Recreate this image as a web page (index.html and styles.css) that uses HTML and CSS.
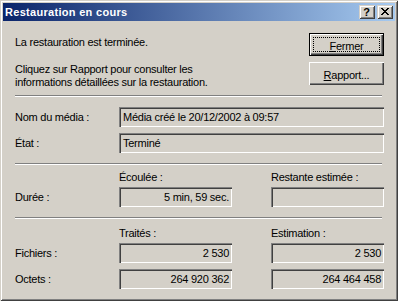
FILE: index.html
```html
<!DOCTYPE html>
<html lang="fr">
<head>
    <meta charset="UTF-8">
    <meta name="viewport" content="width=device-width, initial-scale=1.0">
    <title>Restauration en cours</title>
    <link rel="stylesheet" href="styles.css">
</head>
<body>

    <div class="window">
        <div class="titlebar">
            <span class="title">Restauration en cours</span>
            <div class="caption-btns">
                <button class="cap-btn help">?</button>
                <button class="cap-btn close">
                    <svg width="8" height="7" viewBox="0 0 8 7" shape-rendering="crispEdges">
                        <path d="M0 0h2v1H0zM6 0h2v1H6zM1 1h2v1H1zM5 1h2v1H5zM2 2h4v1H2zM3 3h2v1H3zM2 4h4v1H2zM1 5h2v1H1zM5 5h2v1H5zM0 6h2v1H0zM6 6h2v1H6z" fill="#000"/>
                    </svg>
                </button>
            </div>
        </div>

        <div class="content">
            <div class="top">
                <div class="messages">
                    <p>La restauration est terminée.</p>
                    <p class="second">Cliquez sur Rapport pour consulter les<br>informations détaillées sur la restauration.</p>
                </div>
                <div class="actions">
                    <button class="btn default"><u>F</u>ermer</button>
                    <button class="btn"><u>R</u>apport...</button>
                </div>
            </div>

            <div class="sep sep-1"></div>

            <div class="grid info">
                <span class="label">Nom du média :</span>
                <div class="field wide">Média créé le 20/12/2002 à 09:57</div>
                <span class="label">État :</span>
                <div class="field wide">Terminé</div>
            </div>

            <div class="sep"></div>

            <div class="grid stats">
                <span></span>
                <span class="head">Écoulée :</span>
                <span class="head">Restante estimée :</span>
                <span class="label">Durée :</span>
                <div class="field num">5 min, 59 sec.</div>
                <div class="field num"></div>
            </div>

            <div class="sep"></div>

            <div class="grid stats files">
                <span></span>
                <span class="head">Traités :</span>
                <span class="head">Estimation :</span>
                <span class="label">Fichiers :</span>
                <div class="field num">2 530</div>
                <div class="field num">2 530</div>
                <span class="label">Octets :</span>
                <div class="field num">264 920 362</div>
                <div class="field num">264 464 458</div>
            </div>
        </div>
    </div>

</body>
</html>
```

FILE: styles.css
```css
body { margin: 0; background: #d4d0c8; font-family: "Liberation Sans", Arial, sans-serif; font-size: 11px; color: #000; }
p { margin: 0; }

.window { width: 398px; height: 301px; box-sizing: border-box; padding: 3px; background: #d4d0c8;
    box-shadow: inset 1px 1px #d4d0c8, inset -1px -1px #404040, inset 2px 2px #fff, inset -2px -2px #808080; }

.titlebar { height: 18px; display: flex; justify-content: space-between; align-items: flex-start;
    background: linear-gradient(to right, #0a246a, #a6caf0); }
.title { color: #fff; font-weight: bold; line-height: 18px; padding-left: 2px; letter-spacing: 0.3px; }
.caption-btns { display: flex; gap: 2px; padding: 2px 2px 0 0; }
.cap-btn { width: 16px; height: 14px; padding: 0 1px 1px 0; border: 0; margin: 0; background: #d4d0c8;
    display: flex; align-items: center; justify-content: center;
    box-shadow: inset 1px 1px #d4d0c8, inset -1px -1px #404040, inset 2px 2px #fff, inset -2px -2px #808080; }
.cap-btn.help { font: bold 11px "Liberation Sans", Arial, sans-serif; line-height: 12px; }

.content { padding: 0 11px 0 12px; letter-spacing: -0.25px; }

.top { display: flex; justify-content: space-between; margin-top: 12px; height: 56px; }
.messages { padding-top: 3px; line-height: 13px; }
.messages .second { margin-top: 14px; }
.actions { display: flex; flex-direction: column; gap: 6px; }

.btn { width: 75px; height: 23px; padding: 2px 0 0; margin: 0; border: 0; background: #d4d0c8; color: #000;
    font: 11px "Liberation Sans", Arial, sans-serif; letter-spacing: -0.25px; position: relative;
    box-shadow: inset 1px 1px #fff, inset -1px -1px #404040, inset -2px -2px #808080; }
.btn.default { border: 1px solid #000; }
.btn.default::after { content: ""; position: absolute; top: 3px; left: 3px; right: 3px; bottom: 3px; border: 1px dotted #000; }

.sep { height: 0; border-top: 1px solid #808080; border-bottom: 1px solid #fff; margin: 10px 2px 0 0; }
.sep-1 { margin-top: 6px; }

.grid { display: grid; grid-template-columns: 104px 152px 113px; row-gap: 6px; margin-top: 10px; }
.stats { margin-top: 6px; }
.files { margin-top: 8px; }
.label { line-height: 20px; }
.head { line-height: 13px; margin-bottom: -3px; }

.field { height: 20px; line-height: 20px; padding: 0 3px 0 4px; box-sizing: border-box; white-space: nowrap; overflow: hidden;
    box-shadow: inset 1px 1px #808080, inset 2px 2px #404040, inset -1px -1px #fff, inset -2px -2px #d4d0c8; }
.field.wide { grid-column: span 2; }
.field.num { width: 113px; text-align: right; }
```
